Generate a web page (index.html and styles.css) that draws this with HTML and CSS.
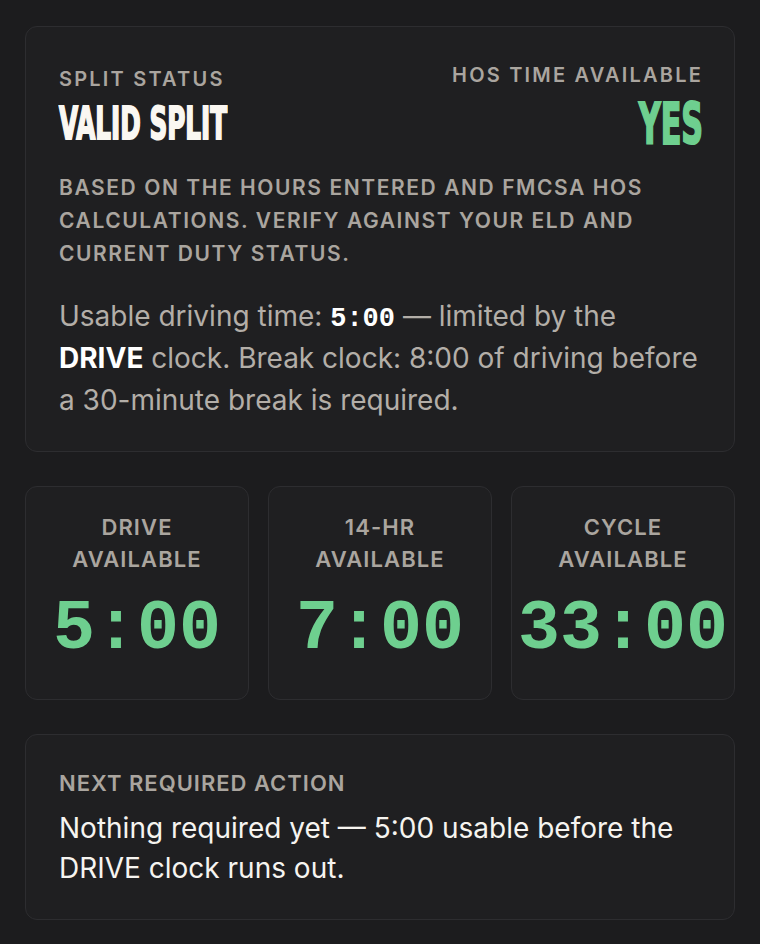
FILE: index.html
```html
<!DOCTYPE html>
<html lang="en">
<head>
<meta charset="utf-8">
<title>HOS Split Status</title>
<link rel="stylesheet" href="styles.css">
</head>
<body>
<main class="wrap">
  <section class="card summary">
    <div class="summary-head">
      <div class="head-left">
        <div class="label">Split Status</div>
        <div class="display"><span class="squeeze">VALID SPLIT</span></div>
      </div>
      <div class="head-right">
        <div class="label">HOS Time Available</div>
        <div class="display yes"><span class="squeeze right">YES</span></div>
      </div>
    </div>
    <p class="note">Based on the hours entered and FMCSA HOS calculations. Verify against your ELD and current duty status.</p>
    <p class="detail">Usable driving time: <code class="mono">5:00</code> — limited by the <strong>DRIVE</strong> clock. Break clock: 8:00 of driving before a 30-minute break is required.</p>
  </section>

  <section class="clocks">
    <div class="card clock">
      <div class="clock-label">Drive<br>Available</div>
      <div class="clock-value">5:00</div>
    </div>
    <div class="card clock">
      <div class="clock-label">14-HR<br>Available</div>
      <div class="clock-value">7:00</div>
    </div>
    <div class="card clock">
      <div class="clock-label">Cycle<br>Available</div>
      <div class="clock-value">33:00</div>
    </div>
  </section>

  <section class="card action">
    <div class="action-label">Next Required Action</div>
    <p class="action-text">Nothing required yet — 5:00 usable before the DRIVE clock runs out.</p>
  </section>
</main>
</body>
</html>
```

FILE: styles.css
```css
html, body {
  margin: 0;
  padding: 0;
  background: #1c1c1e;
}

body {
  font-family: Inter, "Noto Sans", "Liberation Sans", sans-serif;
  color: #f4f2ee;
}

.wrap {
  padding: 26px 25px 24px;
  display: flex;
  flex-direction: column;
  gap: 34px;
}

.card {
  background: #1f1f21;
  border: 1px solid #2d2d30;
  border-radius: 12px;
  box-sizing: border-box;
}

.summary {
  padding: 36px 33px 30px 33px;
}

.summary-head {
  display: flex;
  justify-content: space-between;
  align-items: flex-start;
}

.head-left {
  padding-top: 4px;
}

.head-right {
  text-align: right;
  margin-right: -2px;
}

.label {
  font-size: 20px;
  line-height: 24px;
  font-weight: 600;
  letter-spacing: 0.11em;
  text-transform: uppercase;
  color: #aaa59f;
}

.display {
  font-family: "DejaVu Sans", sans-serif;
  font-stretch: condensed;
  font-weight: 700;
  font-size: 45px;
  line-height: 50px;
  color: #faf7f2;
  -webkit-text-stroke: 2px currentColor;
  margin-top: 8px;
}

.squeeze {
  display: inline-block;
  transform: scaleX(0.61);
  transform-origin: left center;
}

.squeeze.right {
  transform: scaleX(0.59);
  transform-origin: right center;
}

.yes {
  color: #6ecf8f;
  font-size: 57px;
  line-height: 60px;
  margin-top: 7px;
}

.note {
  margin: 17px 0 0;
  font-size: 21px;
  line-height: 33px;
  font-weight: 600;
  letter-spacing: 0.075em;
  text-transform: uppercase;
  color: #aaa59f;
}

.detail {
  margin: 25px 0 0;
  font-size: 28px;
  line-height: 42px;
  color: #b3aea8;
}

.detail strong {
  color: #ffffff;
  font-weight: 700;
}

.mono {
  font-family: "Liberation Mono", "DejaVu Sans Mono", monospace;
  font-weight: 700;
  font-size: 27px;
  line-height: 1;
  color: #ffffff;
}

.clocks {
  display: grid;
  grid-template-columns: repeat(3, 1fr);
  gap: 19px;
}

.clock {
  height: 214px;
  padding-top: 24px;
  text-align: center;
}

.clock-label {
  font-size: 22px;
  line-height: 32px;
  font-weight: 600;
  letter-spacing: 0.05em;
  text-transform: uppercase;
  color: #aaa59f;
}

.clock-value {
  margin-top: 15px;
  font-family: "Liberation Mono", "DejaVu Sans Mono", monospace;
  font-weight: 700;
  font-size: 70px;
  line-height: 80px;
  color: #6ecf8f;
}

.action {
  padding: 36px 33px 31px 33px;
}

.action-label {
  font-size: 22px;
  line-height: 24px;
  font-weight: 600;
  letter-spacing: 0.045em;
  text-transform: uppercase;
  color: #aaa59f;
}

.action-text {
  margin: 13px 0 0;
  font-size: 28px;
  line-height: 40px;
  color: #f6f4f0;
}
```
